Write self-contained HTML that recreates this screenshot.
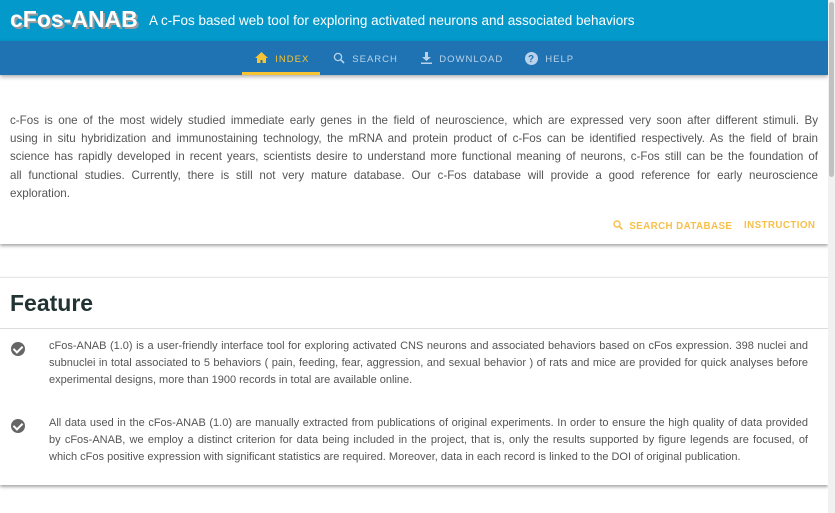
<!DOCTYPE html>
<html><head><style>
*{margin:0;padding:0;box-sizing:border-box}
body{width:835px;height:513px;overflow:hidden;background:#fff;font-family:"Liberation Sans",sans-serif;position:relative}
.top{position:absolute;left:0;top:0;width:828px;height:41px;background:#0399cb}
.logo{position:absolute;left:10px;top:6px;font-size:23px;font-weight:bold;color:#fff;text-shadow:2px 2px 0 #999;letter-spacing:0}
.sub{position:absolute;left:149px;top:13px;font-size:13.5px;color:#fff}
.nav{position:absolute;left:0;top:41px;width:828px;height:34px;background:#1f73b3;box-shadow:0 2px 4px rgba(0,0,0,.3)}
.nav div{position:absolute;top:11px;font-size:9.5px;letter-spacing:1px;color:#b9d2ea}
.nav .act{color:#f5c334}
.ul{position:absolute;left:242px;top:72px;width:78px;height:3px;background:#f5c334}
.card1{position:absolute;left:0;top:76px;width:828px;height:168px;box-shadow:0 2px 3px rgba(0,0,0,.35);background:#fff}
.p1{position:absolute;left:10px;top:36px;width:808px;font-size:11.6px;line-height:18.2px;color:#555}
.j div{white-space:nowrap;text-align:justify;text-align-last:justify}
.j div.l{text-align-last:left}
.btns{position:absolute;top:144px;font-size:9.8px;font-weight:bold;color:#f7c04a;letter-spacing:.4px}
.card2{position:absolute;left:0;top:277px;width:828px;height:208px;border-top:1px solid #e5e5e5;box-shadow:0 2px 3px rgba(0,0,0,.35);background:#fff}
h1{position:absolute;left:10px;top:12px;font-size:23px;color:#233;font-weight:bold}
.hr{position:absolute;left:0;top:50px;width:828px;height:1px;background:#ddd}
.item{position:absolute;left:49px;width:759px;font-size:11px;line-height:17px;color:#555}
.chk{position:absolute;left:11px;width:14px;height:14px;border-radius:50%;background:#666}
.chk:after{content:"";position:absolute;left:4px;top:2px;width:4px;height:7px;border:solid #fff;border-width:0 2px 2px 0;transform:rotate(45deg)}
.sb{position:absolute;left:828px;top:0;width:7px;height:513px;background:#f1f1f1}
.sb div{position:absolute;left:1px;top:2px;width:5px;height:175px;background:#c1c1c1;border-radius:3px}
</style></head><body>
<div class="top"><div class="logo">cFos-ANAB</div><div class="sub">A c-Fos based web tool for exploring activated neurons and associated behaviors</div></div>
<div class="card1">
<div class="p1 j"><div>c-Fos is one of the most widely studied immediate early genes in the field of neuroscience, which are expressed very soon after different stimuli. By</div><div>using in situ hybridization and immunostaining technology, the mRNA and protein product of c-Fos can be identified respectively. As the field of brain</div><div>science has rapidly developed in recent years, scientists desire to understand more functional meaning of neurons, c-Fos still can be the foundation of</div><div>all functional studies. Currently, there is still not very mature database. Our c-Fos database will provide a good reference for early neuroscience</div><div class="l">exploration.</div></div>
<div class="btns" style="left:613px"><svg width="10" height="10" viewBox="0 0 10 10" style="vertical-align:-1px"><circle cx="4" cy="4" r="3" fill="none" stroke="#f7c04a" stroke-width="1.4"/><path d="M6.2 6.2L9.5 9.5" stroke="#f7c04a" stroke-width="1.6"/></svg>&nbsp; SEARCH DATABASE</div>
<div class="btns" style="left:744px">INSTRUCTION</div>
</div>
<div class="nav">
<div class="act" style="left:255px"><svg width="13" height="11" viewBox="0 0 13 11" style="vertical-align:-1px"><path d="M6.5 0L0 6h2v5h3.5V8h2v3H11V6h2z" fill="#f5c334"/></svg>&nbsp; INDEX</div>
<div style="left:333px"><svg width="12" height="12" viewBox="0 0 12 12" style="vertical-align:-2px"><circle cx="5" cy="5" r="3.6" fill="none" stroke="#b9d2ea" stroke-width="1.3"/><path d="M7.6 7.6L11 11" stroke="#b9d2ea" stroke-width="1.6"/></svg>&nbsp; SEARCH</div>
<div style="left:421px"><svg width="11" height="12" viewBox="0 0 11 12" style="vertical-align:-2px"><path d="M4 0h3v5h3L5.5 9 1 5h3zM0 10.5h11V12H0z" fill="#b9d2ea"/></svg>&nbsp; DOWNLOAD</div>
<div style="left:525px"><svg width="13" height="13" viewBox="0 0 13 13" style="vertical-align:-3px"><circle cx="6.5" cy="6.5" r="6.5" fill="#b9d2ea"/><text x="6.5" y="10" font-size="10" font-weight="bold" text-anchor="middle" fill="#1f73b3" font-family="Liberation Sans">?</text></svg>&nbsp; HELP</div>
</div>
<div class="ul"></div>
<div class="card2">
<h1>Feature</h1>
<div class="hr"></div>
<div class="chk" style="top:64px"></div>
<div class="item j" style="top:60px"><div>cFos-ANAB (1.0) is a user-friendly interface tool for exploring activated CNS neurons and associated behaviors based on cFos expression. 398 nuclei and</div><div>subnuclei in total associated to 5 behaviors ( pain, feeding, fear, aggression, and sexual behavior ) of rats and mice are provided for quick analyses before</div><div class="l">experimental designs, more than 1900 records in total are available online.</div></div>
<div class="chk" style="top:141px"></div>
<div class="item j" style="top:137px"><div>All data used in the cFos-ANAB (1.0) are manually extracted from publications of original experiments. In order to ensure the high quality of data provided</div><div>by cFos-ANAB, we employ a distinct criterion for data being included in the project, that is, only the results supported by figure legends are focused, of</div><div class="l">which cFos positive expression with significant statistics are required. Moreover, data in each record is linked to the DOI of original publication.</div></div>
</div>
<div class="sb"><div></div></div>
</body></html>
